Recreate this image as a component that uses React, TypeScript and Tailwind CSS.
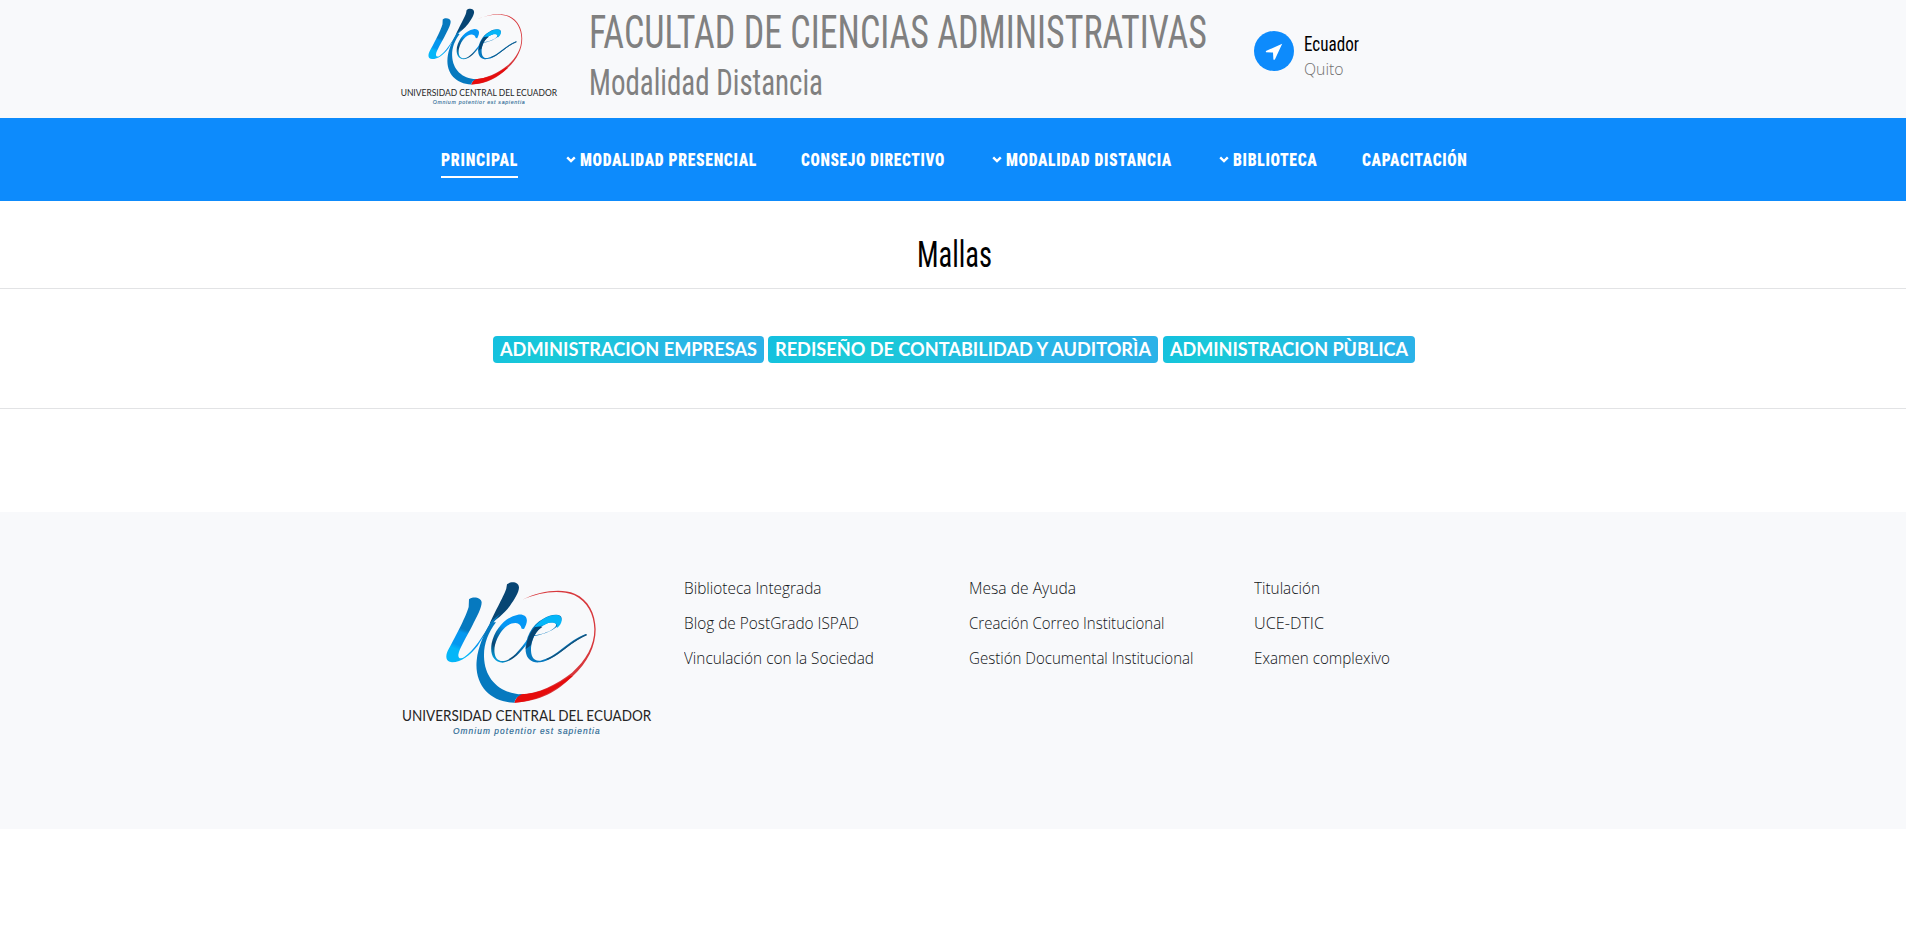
import { useLayoutEffect, useRef } from "react";

type FitProps = { text: string; width: number; className?: string };

// Renders a line of text condensed or widened to an exact width.
function Fit({ text, width, className = "" }: FitProps) {
  const ref = useRef<HTMLSpanElement>(null);
  useLayoutEffect(() => {
    const el = ref.current;
    if (el && el.offsetWidth) {
      el.style.transform = `scaleX(${width / el.getBoundingClientRect().width})`;
    }
    return () => {
      if (el) el.style.transform = "";
    };
  }, [text, width]);
  return (
    <span className={`flex ${className}`} style={{ width }}>
      <span ref={ref} className="inline-block shrink-0 origin-left whitespace-nowrap">
        {text}
      </span>
    </span>
  );
}

function Logo({ className }: { className: string }) {
  return (
    <svg viewBox="0 0 840 540" className={className} fill="none">
      <defs>
        <linearGradient id="stroke-u" x1="250" y1="100" x2="185" y2="290" gradientUnits="userSpaceOnUse">
          <stop offset="0" stopColor="#0679bf" />
          <stop offset=".48" stopColor="#0679bf" />
          <stop offset=".54" stopColor="#0597ef" />
          <stop offset=".73" stopColor="#0597ef" />
          <stop offset=".8" stopColor="#04b6f8" />
        </linearGradient>
        <linearGradient id="stroke-c" x1="410" y1="150" x2="310" y2="290" gradientUnits="userSpaceOnUse">
          <stop offset="0" stopColor="#0597f5" />
          <stop offset=".4" stopColor="#0597f5" />
          <stop offset=".5" stopColor="#0679bf" />
          <stop offset=".75" stopColor="#074573" />
          <stop offset="1" stopColor="#04b6f8" />
        </linearGradient>
      </defs>
      <path d="M397 104C450 78 512 69 554 86C596 104 616 146 617 193C617 244 593 292 548 334C500 380 452 409 373 413L387 389C448 386 500 358 546 323C588 286 613 243 613 193C612 148 592 109 552 90C510 73 451 80 397 104Z" fill="#d8383c" />
      <path d="M373 413C430 410 486 388 548 334L540 332C496 363 448 386 392 388Q378 396 373 413Z" fill="#e60c0c" />
      <path d="M302 172C283 205 264 245 260 287C253 362 303 412 373 413Q377 395 396 388C330 385 284 343 282 275C281 237 294 204 318 172Z" fill="#0679bf" />
      <path d="M351 58C362 48 386 49 387 67C387 82 373 104 360 122C340 149 318 164 299 177C312 145 347 83 349 70Z" fill="#074573" />
      <path d="M237 103C247 93 274 96 275 112C275 129 261 154 246 184C230 215 207 253 205 269C204 281 213 283 223 276C250 259 280 213 304 169L330 146C302 184 280 214 263 242C239 271 216 291 186 292C166 291 166 272 174 256C190 227 226 160 236 126Z" fill="url(#stroke-u)" />
      <path d="M402 192C419 164 410 146 384 149C346 156 314 193 305 235C299 269 311 291 338 293C369 290 397 258 418 225L413 222C390 254 366 284 341 288C318 290 309 269 315 240C325 202 352 173 377 174Q392 176 395 191Z" fill="url(#stroke-c)" />
      <path d="M430 214C471 207 512 187 515 162C516 145 484 146 460 161C425 179 404 220 407 259C410 284 427 295 450 292C502 284 531 235 590 210L587 207C532 228 501 276 451 287C430 289 422 274 423 249C425 216 448 181 475 174C491 170 504 175 496 185C486 198 457 208 430 211Z" fill="#0679bf" />
      <path d="M433 187C455 159 486 147 505 151C520 158 518 177 500 190C508 172 480 167 464 180Z" fill="#04b6f8" />
      <path d="M411 230Q419 201 435 186L458 185C438 198 429 215 423 241L407 252Z" fill="#074573" />
      <path d="M590 209C539 229 510 270 470 283" stroke="#15527b" strokeWidth="4" />
      <text x="36" y="468" textLength="748" lengthAdjust="spacingAndGlyphs" fontFamily="Lato, sans-serif" fontSize="43" fill="#262626">
        UNIVERSIDAD CENTRAL DEL ECUADOR
      </text>
      <text x="189" y="507" textLength="440" lengthAdjust="spacing" fontFamily="Liberation Sans, sans-serif" fontStyle="italic" fontSize="25" fill="#2c6a94" stroke="#2c6a94" strokeWidth=".5">
        Omnium potentior est sapientia
      </text>
    </svg>
  );
}

const navItems = [
  { text: "PRINCIPAL", width: 77, gap: "", active: true },
  { text: "MODALIDAD PRESENCIAL", width: 177, gap: "ml-[47.5px]", menu: true },
  { text: "CONSEJO DIRECTIVO", width: 144, gap: "ml-[44px]" },
  { text: "MODALIDAD DISTANCIA", width: 166, gap: "ml-[47px]", menu: true },
  { text: "BIBLIOTECA", width: 84.5, gap: "ml-[47.5px]", menu: true },
  { text: "CAPACITACIÓN", width: 105.5, gap: "ml-[44px]" },
];

const badges = [
  { text: "ADMINISTRACION EMPRESAS", width: 257 },
  { text: "REDISEÑO DE CONTABILIDAD Y AUDITORÌA", width: 376 },
  { text: "ADMINISTRACION PÙBLICA", width: 238 },
];

const footerColumns = [
  [
    { text: "Biblioteca Integrada", width: 137.5 },
    { text: "Blog de PostGrado ISPAD", width: 175 },
    { text: "Vinculación con la Sociedad", width: 190 },
  ],
  [
    { text: "Mesa de Ayuda", width: 107 },
    { text: "Creación Correo Institucional", width: 195.5 },
    { text: "Gestión Documental Institucional", width: 224.5 },
  ],
  [
    { text: "Titulación", width: 66 },
    { text: "UCE-DTIC", width: 70 },
    { text: "Examen complexivo", width: 136 },
  ],
];

export default function App() {
  return (
    <div className="min-h-[926px] bg-white font-['Roboto',sans-serif]">
      <header className="h-[118px] bg-[#f8f9fb]">
        <div className="mx-auto flex w-[1140px]">
          <Logo className="-mt-[2px] ml-[10px] h-[113px] w-[176px] shrink-0" />
          <div className="ml-[20px] w-[665px] pt-2 text-[#808080] [font-stretch:75%]">
            <h1 className="text-[46px] font-[450] leading-[48px]">
              <Fit text="FACULTAD DE CIENCIAS ADMINISTRATIVAS" width={618} />
            </h1>
            <h2 className="mt-2 text-[36.5px] font-[450] leading-[38px]">
              <Fit text="Modalidad Distancia" width={234} />
            </h2>
          </div>
          <div className="mt-[31px] flex">
            <span className="flex size-10 items-center justify-center rounded-full bg-[#0d8bfc]">
              <svg viewBox="0 0 20 20" className="size-5 fill-white">
                <path d="M18.2 2.8L2.4 9.7Q1.4 10.3 2 11.3L9 11.6L9.4 18.4Q10.3 19.2 11 18.2Z" />
              </svg>
            </span>
            <div className="ml-[10px]">
              <Fit text="Ecuador" width={55} className="h-6 text-[20px] leading-[26px] text-black [font-stretch:75%]" />
              <Fit text="Quito" width={39.5} className="mt-[2px] font-['Open_Sans',sans-serif] text-[16px] font-light leading-6 text-[#707070]" />
            </div>
          </div>
        </div>
      </header>

      <nav className="flex h-[83px] bg-[#0d8bfc] pl-[441px] pt-[26px] text-[19px] font-black leading-[31px] tracking-[0.8px] text-white [font-stretch:75%]">
        {navItems.map((item) => (
          <a key={item.text} className={`flex h-[34px] items-start ${item.gap} ${item.active ? "border-b-2 border-white" : ""}`}>
            {item.menu && (
              <svg viewBox="0 0 10 7" className="mr-1 mt-[12px] h-[7px] w-[10px]" fill="none">
                <path d="M1.2 1.3L5 5L8.8 1.3" stroke="white" strokeWidth="2.4" />
              </svg>
            )}
            <Fit text={item.text} width={item.width} />
          </a>
        ))}
      </nav>

      <main className="h-[311px]">
        <h2 className="flex h-[87px] justify-center pl-[2px] pt-[35px] text-[36.5px] leading-[38px] text-black [font-stretch:75%]">
          <Fit text="Mallas" width={75} />
        </h2>
        <div className="flex h-[121px] items-start justify-center gap-[4.5px] border-y border-[#e2e3e5] pl-[1px] pt-[47px]">
          {badges.map((b) => (
            <span
              key={b.text}
              className="flex h-[27px] rounded bg-[linear-gradient(135deg,#14bfe0_0%,#19cad7_25%,#2bb2e8_75%,#2bb2e8_100%)] px-[7px] font-['Lato',sans-serif] text-[19px] font-bold leading-[25px] text-white"
            >
              <Fit text={b.text} width={b.width} />
            </span>
          ))}
        </div>
      </main>

      <footer className="h-[317px] bg-[#f8f9fb]">
        <div className="mx-auto grid w-[1140px] grid-cols-4 pt-[53px]">
          <Logo className="ml-[7px] h-[180px] w-[280px]" />
          {footerColumns.map((col) => (
            <ul key={col[0].text} className="flex flex-col gap-[11px] pl-[15.5px] pt-[11px] font-['Open_Sans',sans-serif] text-[15.8px] font-light leading-6 text-[#111417]">
              {col.map((l) => (
                <li key={l.text}>
                  <Fit text={l.text} width={l.width} />
                </li>
              ))}
            </ul>
          ))}
        </div>
      </footer>
    </div>
  );
}
